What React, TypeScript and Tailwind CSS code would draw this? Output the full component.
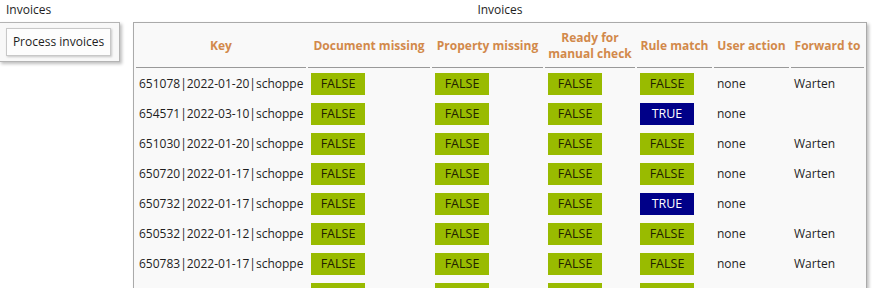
const rows = [
  { key: "651078|2022-01-20|schoppe", rule: false, fwd: "Warten" },
  { key: "654571|2022-03-10|schoppe", rule: true, fwd: "" },
  { key: "651030|2022-01-20|schoppe", rule: false, fwd: "Warten" },
  { key: "650720|2022-01-17|schoppe", rule: false, fwd: "Warten" },
  { key: "650732|2022-01-17|schoppe", rule: true, fwd: "" },
  { key: "650532|2022-01-12|schoppe", rule: false, fwd: "Warten" },
  { key: "650783|2022-01-17|schoppe", rule: false, fwd: "Warten" },
  { key: "650790|2022-01-17|schoppe", rule: false, fwd: "Warten" },
];

function Badge({ value }: { value: boolean }) {
  return value ? (
    <span className="inline-block h-[22px] w-[54px] bg-[#000088] text-center text-[12.5px] leading-[22px] text-white">
      TRUE
    </span>
  ) : (
    <span className="inline-block h-[22px] w-[54px] bg-[#99bb00] text-center text-[12.5px] leading-[22px] text-[#222200]">
      FALSE
    </span>
  );
}

const th =
  "whitespace-nowrap border-b border-[#999] px-0 text-center align-middle font-bold leading-[16px] text-[#d2894b]";

export default function App() {
  return (
    <div
      className="flex h-[288px] w-[872px] overflow-hidden bg-white text-[12px] text-[#1e1e1e]"
      style={{ fontFamily: '"Open Sans", "Noto Sans", sans-serif' }}
    >
      <div className="ml-[-1px] w-[121px] shrink-0">
        <div className="h-[22px] pl-[7px] leading-[20px]">Invoices</div>
        <div className="h-[40px] border border-[#b4b4b4] bg-[#f8f8f8] pl-[6px] pt-[5px] shadow-[2px_2px_3px_rgba(0,0,0,0.25)]">
          <button className="h-[28px] w-[105px] border border-[#c8c8c8] bg-[#fdfdfd] text-center leading-[24px] shadow-[1px_1px_2px_rgba(0,0,0,0.2)]">
            Process invoices
          </button>
        </div>
      </div>

      <div className="ml-[13px] w-[734px] shrink-0">
        <div className="h-[22px] text-center leading-[20px]">Invoices</div>
        <div className="h-[300px] border border-[#aaa] bg-[#f9f9f9] shadow-[2px_2px_3px_rgba(0,0,0,0.25)]">
          <table className="w-[732px] table-fixed border-separate border-spacing-[2px] text-left">
            <colgroup>
              <col className="w-[170px]" />
              <col className="w-[122px]" />
              <col className="w-[111px]" />
              <col className="w-[90px]" />
              <col className="w-[75px]" />
              <col className="w-[75px]" />
              <col className="w-[73px]" />
            </colgroup>
            <thead>
              <tr className="h-[43px]">
                <th className={th}>Key</th>
                <th className={th}>Document missing</th>
                <th className={th}>Property missing</th>
                <th className={th}>
                  Ready for
                  <br />
                  manual check
                </th>
                <th className={th}>Rule match</th>
                <th className={th}>User action</th>
                <th className={th}>Forward to</th>
              </tr>
            </thead>
            <tbody>
              {rows.map((r) => (
                <tr key={r.key} className="h-[28px]">
                  <td className="whitespace-nowrap px-[3px]">{r.key}</td>
                  <td className="px-[3px]">
                    <Badge value={false} />
                  </td>
                  <td className="px-[3px]">
                    <Badge value={false} />
                  </td>
                  <td className="px-[3px]">
                    <Badge value={false} />
                  </td>
                  <td className="px-[3px]">
                    <Badge value={r.rule} />
                  </td>
                  <td className="px-[3px]">none</td>
                  <td className="px-[3px]">{r.fwd}</td>
                </tr>
              ))}
            </tbody>
          </table>
        </div>
      </div>
    </div>
  );
}
